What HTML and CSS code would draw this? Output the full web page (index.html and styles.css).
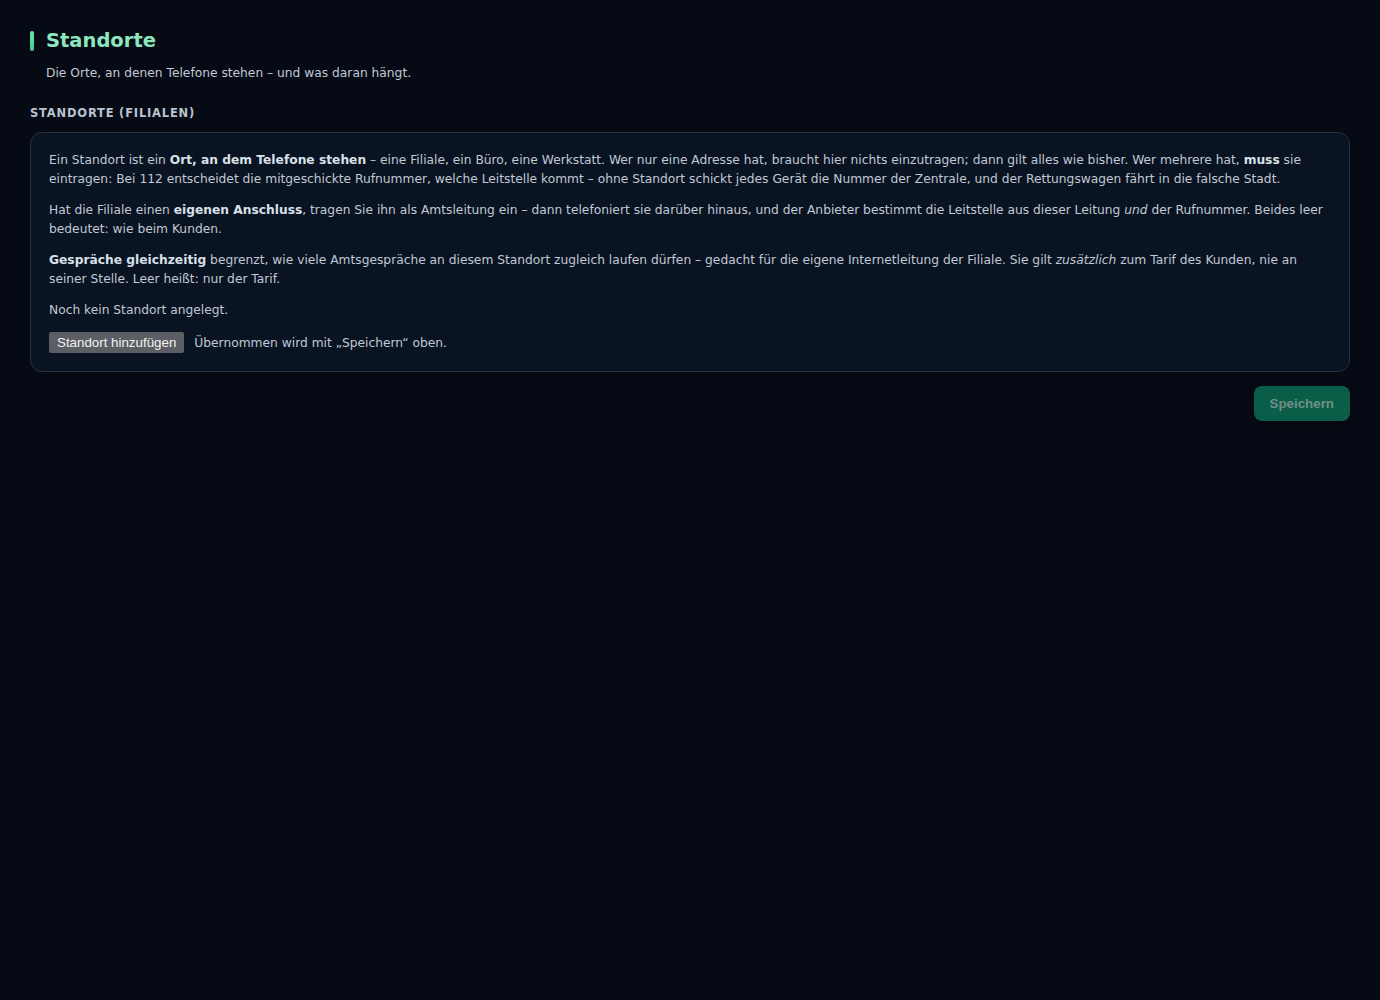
FILE: index.html
```html
<!DOCTYPE html>
<html lang="de">
<head>
<meta charset="utf-8">
<title>Standorte</title>
<link rel="stylesheet" href="styles.css">
</head>
<body>
<main class="page">
  <header class="head">
    <h1 class="title">Standorte</h1>
    <p class="subtitle">Die Orte, an denen Telefone stehen – und was daran hängt.</p>
  </header>
  <h2 class="section-label">STANDORTE (FILIALEN)</h2>
  <section class="card">
    <p>Ein Standort ist ein <b>Ort, an dem Telefone stehen</b> – eine Filiale, ein Büro, eine Werkstatt. Wer nur eine Adresse hat, braucht hier nichts einzutragen; dann gilt alles wie bisher. Wer mehrere hat, <b>muss</b> sie eintragen: Bei 112 entscheidet die mitgeschickte Rufnummer, welche Leitstelle kommt – ohne Standort schickt jedes Gerät die Nummer der Zentrale, und der Rettungswagen fährt in die falsche Stadt.</p>
    <p>Hat die Filiale einen <b>eigenen Anschluss</b>, tragen Sie ihn als Amtsleitung ein – dann telefoniert sie darüber hinaus, und der Anbieter bestimmt die Leitstelle aus dieser Leitung <i>und</i> der Rufnummer. Beides leer bedeutet: wie beim Kunden.</p>
    <p><b>Gespräche gleichzeitig</b> begrenzt, wie viele Amtsgespräche an diesem Standort zugleich laufen dürfen – gedacht für die eigene Internetleitung der Filiale. Sie gilt <i>zusätzlich</i> zum Tarif des Kunden, nie an seiner Stelle. Leer heißt: nur der Tarif.</p>
    <p>Noch kein Standort angelegt.</p>
    <div class="actions">
      <button class="btn-add" type="button">Standort hinzufügen</button>
      <span class="hint">Übernommen wird mit „Speichern“ oben.</span>
    </div>
  </section>
  <div class="footer">
    <button class="btn-save" type="button" disabled>Speichern</button>
  </div>
</main>
</body>
</html>
```

FILE: styles.css
```css
html, body {
  margin: 0;
  padding: 0;
  background: #060a14;
}
body {
  font-family: "DejaVu Sans", sans-serif;
  color: #c0c9d5;
  font-size: 12.25px;
}
.page {
  padding: 30px 30px 30px 30px;
}
.head {
  margin-bottom: 23px;
}
.title {
  margin: 0;
  font-size: 19.5px;
  font-weight: bold;
  color: #8de6bf;
  line-height: 22px;
  padding-left: 16px;
  position: relative;
}
.title::before {
  content: "";
  position: absolute;
  left: 0;
  top: 1px;
  width: 4px;
  height: 20px;
  border-radius: 2px;
  background: linear-gradient(180deg, #6fe3b0, #3ccf8c);
}
.subtitle {
  margin: 12px 0 0 16px;
  line-height: 18px;
}
.section-label {
  margin: 0 0 11px 0;
  font-size: 11.5px;
  font-weight: bold;
  letter-spacing: 0.8px;
  color: #b9c4d2;
  line-height: 16px;
}
.card {
  background: #0a1321;
  border: 1px solid #263142;
  border-radius: 12px;
  padding: 18px 18px 18px 18px;
}
.card p {
  margin: 0 0 12px 0;
  line-height: 19px;
}
.card b {
  color: #d8e0ea;
}
.actions {
  display: flex;
  align-items: center;
  gap: 10px;
}
.btn-add {
  font-family: "Liberation Sans", Arial, sans-serif;
  font-size: 13.333px;
  background: #5b5e62;
  color: #f2f2f2;
  border: none;
  border-radius: 2px;
  padding: 0 8px;
  height: 21px;
  line-height: 21px;
}
.footer {
  display: flex;
  justify-content: flex-end;
  margin-top: 14px;
}
.btn-save {
  font-family: "Liberation Sans", Arial, sans-serif;
  font-size: 13.333px;
  font-weight: bold;
  background: #0a5e47;
  color: #6f9088;
  border: none;
  border-radius: 8px;
  height: 35px;
  padding: 0 16px;
  box-shadow: 0 2px 8px rgba(0, 0, 0, 0.4);
}
```
